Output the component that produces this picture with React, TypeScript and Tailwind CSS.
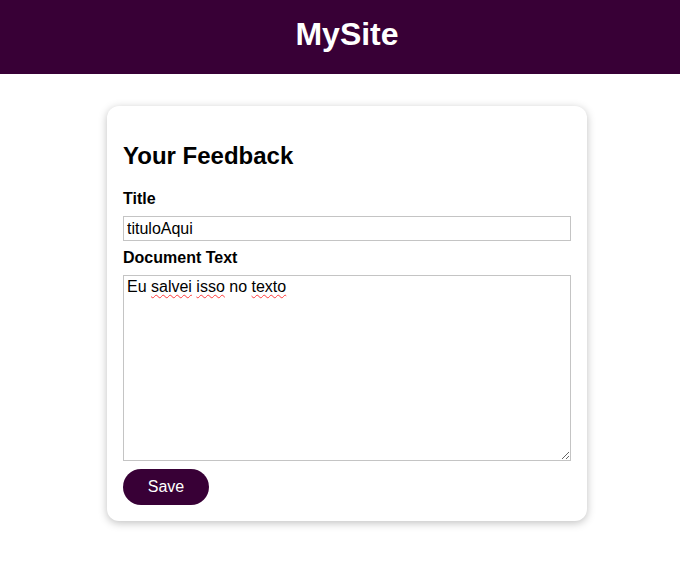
const misspelled = new Set(["salvei", "isso", "texto"]);
const docText = "Eu salvei isso no texto";

export default function App() {
  return (
    <div className="min-h-screen overflow-hidden bg-white font-['Liberation_Sans',Arial,sans-serif] text-black">
      <div className="w-[694px]">
        <header className="flex h-[74px] items-center justify-center bg-[#380036] pb-[6px]">
          <h1 className="text-[32px] font-bold leading-[37px] text-white">MySite</h1>
        </header>

        <main className="flex justify-center pt-8">
          <form className="flex w-[480px] flex-col rounded-xl bg-white p-4 shadow-[0_2px_8px_rgba(0,0,0,0.25)]">
            <h2 className="mt-[20px] mb-[20px] text-2xl leading-[28px] font-bold">Your Feedback</h2>

            <label className="mb-2 text-base leading-[18px] font-bold">Title</label>
            <input
              type="text"
              defaultValue="tituloAqui"
              className="mb-2 h-[25px] w-full border border-[#c4c4c4] px-[3px] text-base leading-[18px] outline-none"
            />

            <label className="mb-2 text-base leading-[18px] font-bold">Document Text</label>
            <div className="relative mb-2">
              <textarea
                defaultValue={docText}
                spellCheck={false}
                className="block h-[186px] w-full resize border border-[#c4c4c4] bg-transparent px-[3px] py-[2px] text-base leading-[18px] outline-none"
              />
              {/* spellcheck squiggles */}
              <div className="pointer-events-none absolute top-[3px] left-[4px] text-base leading-[18px] whitespace-pre text-transparent">
                {docText.split(" ").map((w, i) => (
                  <span key={i}>
                    {i > 0 ? " " : ""}
                    <span className={misspelled.has(w) ? "underline decoration-[#ff3b3b] decoration-wavy decoration-1 underline-offset-2" : ""}>
                      {w}
                    </span>
                  </span>
                ))}
              </div>
            </div>

            <button
              type="button"
              className="h-9 w-[86px] rounded-full bg-[#380036] text-base text-white"
            >
              Save
            </button>
          </form>
        </main>
      </div>
    </div>
  );
}
